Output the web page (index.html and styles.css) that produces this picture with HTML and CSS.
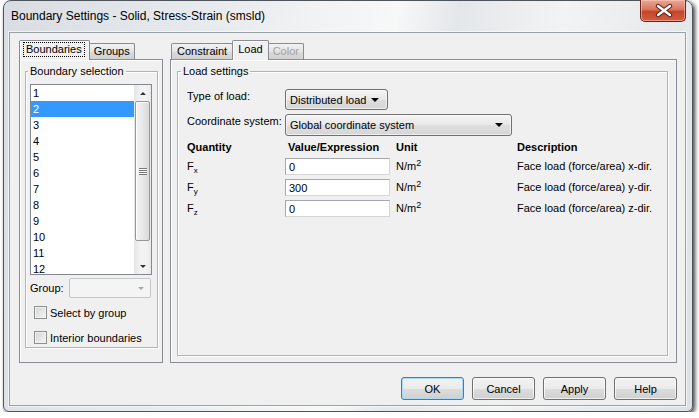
FILE: index.html
```html
<!DOCTYPE html>
<html lang="en">

<head>
    <meta charset="UTF-8">
    <title>Boundary Settings - Solid, Stress-Strain (smsld)</title>
    <link rel="stylesheet" href="styles.css">
</head>

<body>
    <div class="window">
        <div class="titlebar">
            <span class="title">Boundary Settings - Solid, Stress-Strain (smsld)</span>
            <div class="close">
                <svg width="46" height="21" viewBox="0 0 46 21">
                    <path d="M17 6 L29 15 M29 6 L17 15" stroke="#5a1a10" stroke-width="4.4" stroke-linecap="round" fill="none" />
                    <path d="M17 6 L29 15 M29 6 L17 15" stroke="#fff" stroke-width="2.4" stroke-linecap="round" fill="none" />
                </svg>
            </div>
        </div>

        <div class="client">
            <div class="panels">
                <div class="tabbox tabbox-left">
                    <div class="tabstrip">
                        <span class="tab active"><span class="focus">Boundaries</span></span>
                        <span class="tab">Groups</span>
                    </div>
                    <div class="tabpanel">
                        <fieldset class="group group-sel">
                            <legend>Boundary selection</legend>
                            <div class="listbox">
                                <ul class="items">
                                    <li>1</li>
                                    <li class="selected">2</li>
                                    <li>3</li>
                                    <li>4</li>
                                    <li>5</li>
                                    <li>6</li>
                                    <li>7</li>
                                    <li>8</li>
                                    <li>9</li>
                                    <li>10</li>
                                    <li>11</li>
                                    <li>12</li>
                                </ul>
                                <div class="vscroll">
                                    <div class="sb-btn"><i class="tri-up"></i></div>
                                    <div class="sb-track">
                                        <div class="thumb"><span class="grip"></span></div>
                                    </div>
                                    <div class="sb-btn"><i class="tri-down"></i></div>
                                </div>
                            </div>
                            <div class="group-row">
                                <span class="group-label">Group:</span>
                                <div class="combo-disabled"><i class="tri-down gray"></i></div>
                            </div>
                            <label class="check first"><span class="box"></span>Select by group</label>
                            <label class="check"><span class="box"></span>Interior boundaries</label>
                        </fieldset>
                    </div>
                </div>

                <div class="tabbox tabbox-right">
                    <div class="tabstrip">
                        <span class="tab">Constraint</span>
                        <span class="tab active">Load</span>
                        <span class="tab disabled">Color</span>
                    </div>
                    <div class="tabpanel">
                        <fieldset class="group group-load">
                            <legend>Load settings</legend>
                            <div class="form">
                                <span class="flabel">Type of load:</span>
                                <div class="select select-type"><span>Distributed load</span><i class="tri-down"></i></div>
                                <span class="flabel">Coordinate system:</span>
                                <div class="select select-coord"><span>Global coordinate system</span><i class="tri-down"></i></div>
                            </div>
                            <div class="qtable">
                                <b>Quantity</b>
                                <b class="hval">Value/Expression</b>
                                <b>Unit</b>
                                <b>Description</b>

                                <span>F<sub>x</sub></span>
                                <input type="text" value="0">
                                <span>N/m<sup>2</sup></span>
                                <span>Face load (force/area) x-dir.</span>

                                <span>F<sub>y</sub></span>
                                <input type="text" value="300">
                                <span>N/m<sup>2</sup></span>
                                <span>Face load (force/area) y-dir.</span>

                                <span>F<sub>z</sub></span>
                                <input type="text" value="0">
                                <span>N/m<sup>2</sup></span>
                                <span>Face load (force/area) z-dir.</span>
                            </div>
                        </fieldset>
                    </div>
                </div>
            </div>

            <div class="buttons">
                <button class="btn default">OK</button>
                <button class="btn">Cancel</button>
                <button class="btn">Apply</button>
                <button class="btn">Help</button>
            </div>
        </div>
    </div>
</body>

</html>
```

FILE: styles.css
```css
* {
    box-sizing: border-box;
}

body {
    margin: 0;
    background: #ffffff;
    font-family: "Liberation Sans", Arial, sans-serif;
    font-size: 11px;
    color: #000;
    overflow: hidden;
}

/* window frame */
.window {
    width: 690px;
    height: 412px;
    margin-left: 3px;
    border: 1px solid #4e545c;
    border-radius: 8px 8px 6px 6px;
    background: linear-gradient(100deg, #d9dde2 0%, #e9ecef 30%, #f7f8f8 52%, #e4e7ea 60%, #f2f3f4 74%, #dde1e5 100%);
    box-shadow: 2px 2px 4px rgba(0, 0, 0, 0.75);
    display: flex;
    flex-direction: column;
}

.titlebar {
    height: 31px;
    display: flex;
    align-items: flex-start;
}

.title {
    font-size: 12px;
    line-height: 15px;
    padding: 8px 0 0 7px;
    color: #000;
}

.close {
    margin-left: auto;
    margin-right: 6px;
    margin-top: -1px;
    width: 46px;
    height: 22px;
    border: 1px solid #6e2418;
    border-top: none;
    border-radius: 0 0 5px 5px;
    background: linear-gradient(#e9a896 0%, #d8765d 45%, #c5452a 55%, #d25d3f 100%);
    box-shadow: inset 0 0 0 1px rgba(255, 210, 200, 0.5);
}

.close svg {
    display: block;
}

.client {
    width: 677px;
    height: 374px;
    margin-left: 5px;
    border: 1px solid #9aa1a9;
    background: #f0f0f0;
    padding: 7px 8px 0 9px;
    box-shadow: 0 0 0 1px rgba(255, 255, 255, 0.6);
}

.panels {
    display: flex;
    gap: 7px;
}

/* tabs */
.tabbox-left {
    width: 144px;
}

.tabbox-right {
    width: 507px;
}

.tabstrip {
    height: 19px;
    display: flex;
    align-items: flex-end;
}

.tabbox-right .tabstrip {
    padding-left: 1px;
}

.tab {
    height: 16px;
    line-height: 14px;
    padding: 0 5px;
    border: 1px solid #898c95;
    border-bottom: none;
    border-radius: 2px 2px 0 0;
    background: linear-gradient(#f2f2f2, #e4e4e4 50%, #dadada 51%, #d2d2d2);
    margin-right: -1px;
}

.tabbox-left .tab {
    padding: 0 4px;
}

.tab.active {
    position: relative;
    z-index: 1;
    height: 20px;
    margin-bottom: -1px;
    line-height: 17px;
    background: #f0f0f0;
    box-shadow: inset 1px 1px 0 #fff;
    padding: 0 5px 0 5px;
}

.tab.disabled {
    color: #a3a3a3;
    padding: 0 4px;
}

.focus {
    display: inline-block;
    outline: 1px dotted #000;
    line-height: 13px;
    padding: 0 2px;
    margin-left: -1px;
}

.tabpanel {
    height: 304px;
    border: 1px solid #898c95;
    background: #f0f0f0;
    box-shadow: inset 1px 1px 0 #fff;
    display: flex;
    flex-direction: column;
}

/* group boxes */
.group {
    margin: 5px 4px 0 5px;
    border: 1px solid #b4b4b4;
    box-shadow: inset 1px 1px 0 #fff, 1px 1px 0 #fff;
    min-width: 0;
}

.group legend {
    padding: 0 2px;
    margin-left: -2px;
    line-height: 13px;
}

.group-sel {
    padding: 6px 5px 3px 4px;
}

.group-load {
    margin: 5px 8px 6px 6px;
    padding: 11px 9px 0 9px;
    flex: 1;
}

.group-load legend {
    margin-left: -6px;
}

/* listbox */
.listbox {
    height: 191px;
    border: 1px solid #828790;
    background: #fff;
    display: flex;
}

.items {
    flex: 1;
    list-style: none;
    margin: 0;
    padding: 0;
    overflow: hidden;
}

.items li {
    height: 16px;
    line-height: 16px;
    padding-left: 2px;
}

.items li.selected {
    background: #3399ff;
    color: #fff;
}

.vscroll {
    width: 17px;
    display: flex;
    flex-direction: column;
    background: linear-gradient(to right, #e6e6e6, #f3f3f3 40%, #f3f3f3 70%, #e9e9e9);
}

.sb-btn {
    height: 16px;
    display: flex;
    align-items: center;
    justify-content: center;
}

.sb-track {
    flex: 1;
    padding: 0 1px;
}

.thumb {
    height: 140px;
    border: 1px solid #979797;
    border-radius: 2px;
    background: linear-gradient(to right, #f4f4f4, #e8e8e8 50%, #d9d9d9);
    box-shadow: inset 1px 1px 0 #fff;
    display: flex;
    align-items: center;
    justify-content: center;
}

.grip {
    width: 8px;
    height: 7px;
    background: repeating-linear-gradient(#777 0 1px, #fafafa 1px 2px);
}

.tri-up,
.tri-down {
    display: block;
    width: 0;
    height: 0;
    border-left: 3px solid transparent;
    border-right: 3px solid transparent;
}

.tri-up {
    border-bottom: 3px solid #333;
}

.tri-down {
    border-top: 3px solid #333;
}

.tri-down.gray {
    border-top-color: #a8a8a8;
}

/* group combo + checkboxes */
.group-row {
    margin-top: 3px;
    height: 20px;
    display: flex;
    align-items: center;
}

.group-label {
    width: 39px;
}

.combo-disabled {
    width: 82px;
    height: 20px;
    border: 1px solid #c6c6c6;
    border-radius: 2px;
    background: #f4f4f4;
    display: flex;
    align-items: center;
    justify-content: flex-end;
    padding-right: 6px;
}

.check {
    display: flex;
    align-items: center;
    height: 13px;
    margin-top: 12px;
    padding-left: 4px;
    gap: 3px;
}

.check.first {
    margin-top: 8px;
}

.box {
    width: 13px;
    height: 13px;
    border: 1px solid #8e8f8f;
    background: linear-gradient(135deg, #d3d3d3, #f6f6f6);
    box-shadow: inset 0 0 0 1px #f2f2f2;
}

/* load settings */
.form {
    display: grid;
    grid-template-columns: 98px auto;
    row-gap: 4px;
    justify-items: start;
    align-items: start;
}

.flabel {
    line-height: 15px;
}

.select {
    display: flex;
    align-items: center;
    padding: 0 8px 0 4px;
    border: 1px solid #707070;
    border-radius: 3px;
    background: linear-gradient(#f4f4f4, #e8e8e8 50%, #dedede 51%, #d6d6d6);
    box-shadow: inset 0 0 0 1px rgba(255, 255, 255, 0.6);
}

.select i {
    margin-left: auto;
    border-left-width: 4px;
    border-right-width: 4px;
    border-top-width: 4px;
    border-top-color: #000;
}

.select-type {
    width: 103px;
    height: 21px;
}

.select-coord {
    width: 227px;
    height: 22px;
}

.qtable {
    margin-top: 5px;
    display: grid;
    grid-template-columns: 98px 111px 121px auto;
    grid-template-rows: 13px repeat(3, 17px);
    row-gap: 4px;
    align-items: center;
    line-height: 13px;
}

.qtable .hval {
    padding-left: 3px;
}

.qtable sub {
    font-size: 8px;
    vertical-align: -3px;
    line-height: 0;
}

.qtable sup {
    font-size: 9px;
    vertical-align: 4px;
    line-height: 0;
}

.qtable input {
    width: 105px;
    height: 17px;
    margin: 0;
    padding: 0 3px;
    border: 1px solid #a5a7ad;
    border-right-color: #d4d6da;
    border-bottom-color: #d4d6da;
    font: inherit;
    background: #fff;
}

/* dialog buttons */
.buttons {
    margin-top: 14px;
    display: flex;
    justify-content: flex-end;
    gap: 8px;
}

.btn {
    width: 63px;
    height: 23px;
    margin: 0;
    padding: 0;
    font: inherit;
    color: #000;
    border: 1px solid #707070;
    border-radius: 3px;
    background: linear-gradient(#f2f2f2, #ebebeb 50%, #dddddd 51%, #cfcfcf);
    box-shadow: inset 0 0 0 1px rgba(255, 255, 255, 0.7);
}

.btn.default {
    border-color: #3c7fb1;
    box-shadow: inset 0 0 0 1px #a8dcf6;
}
```
